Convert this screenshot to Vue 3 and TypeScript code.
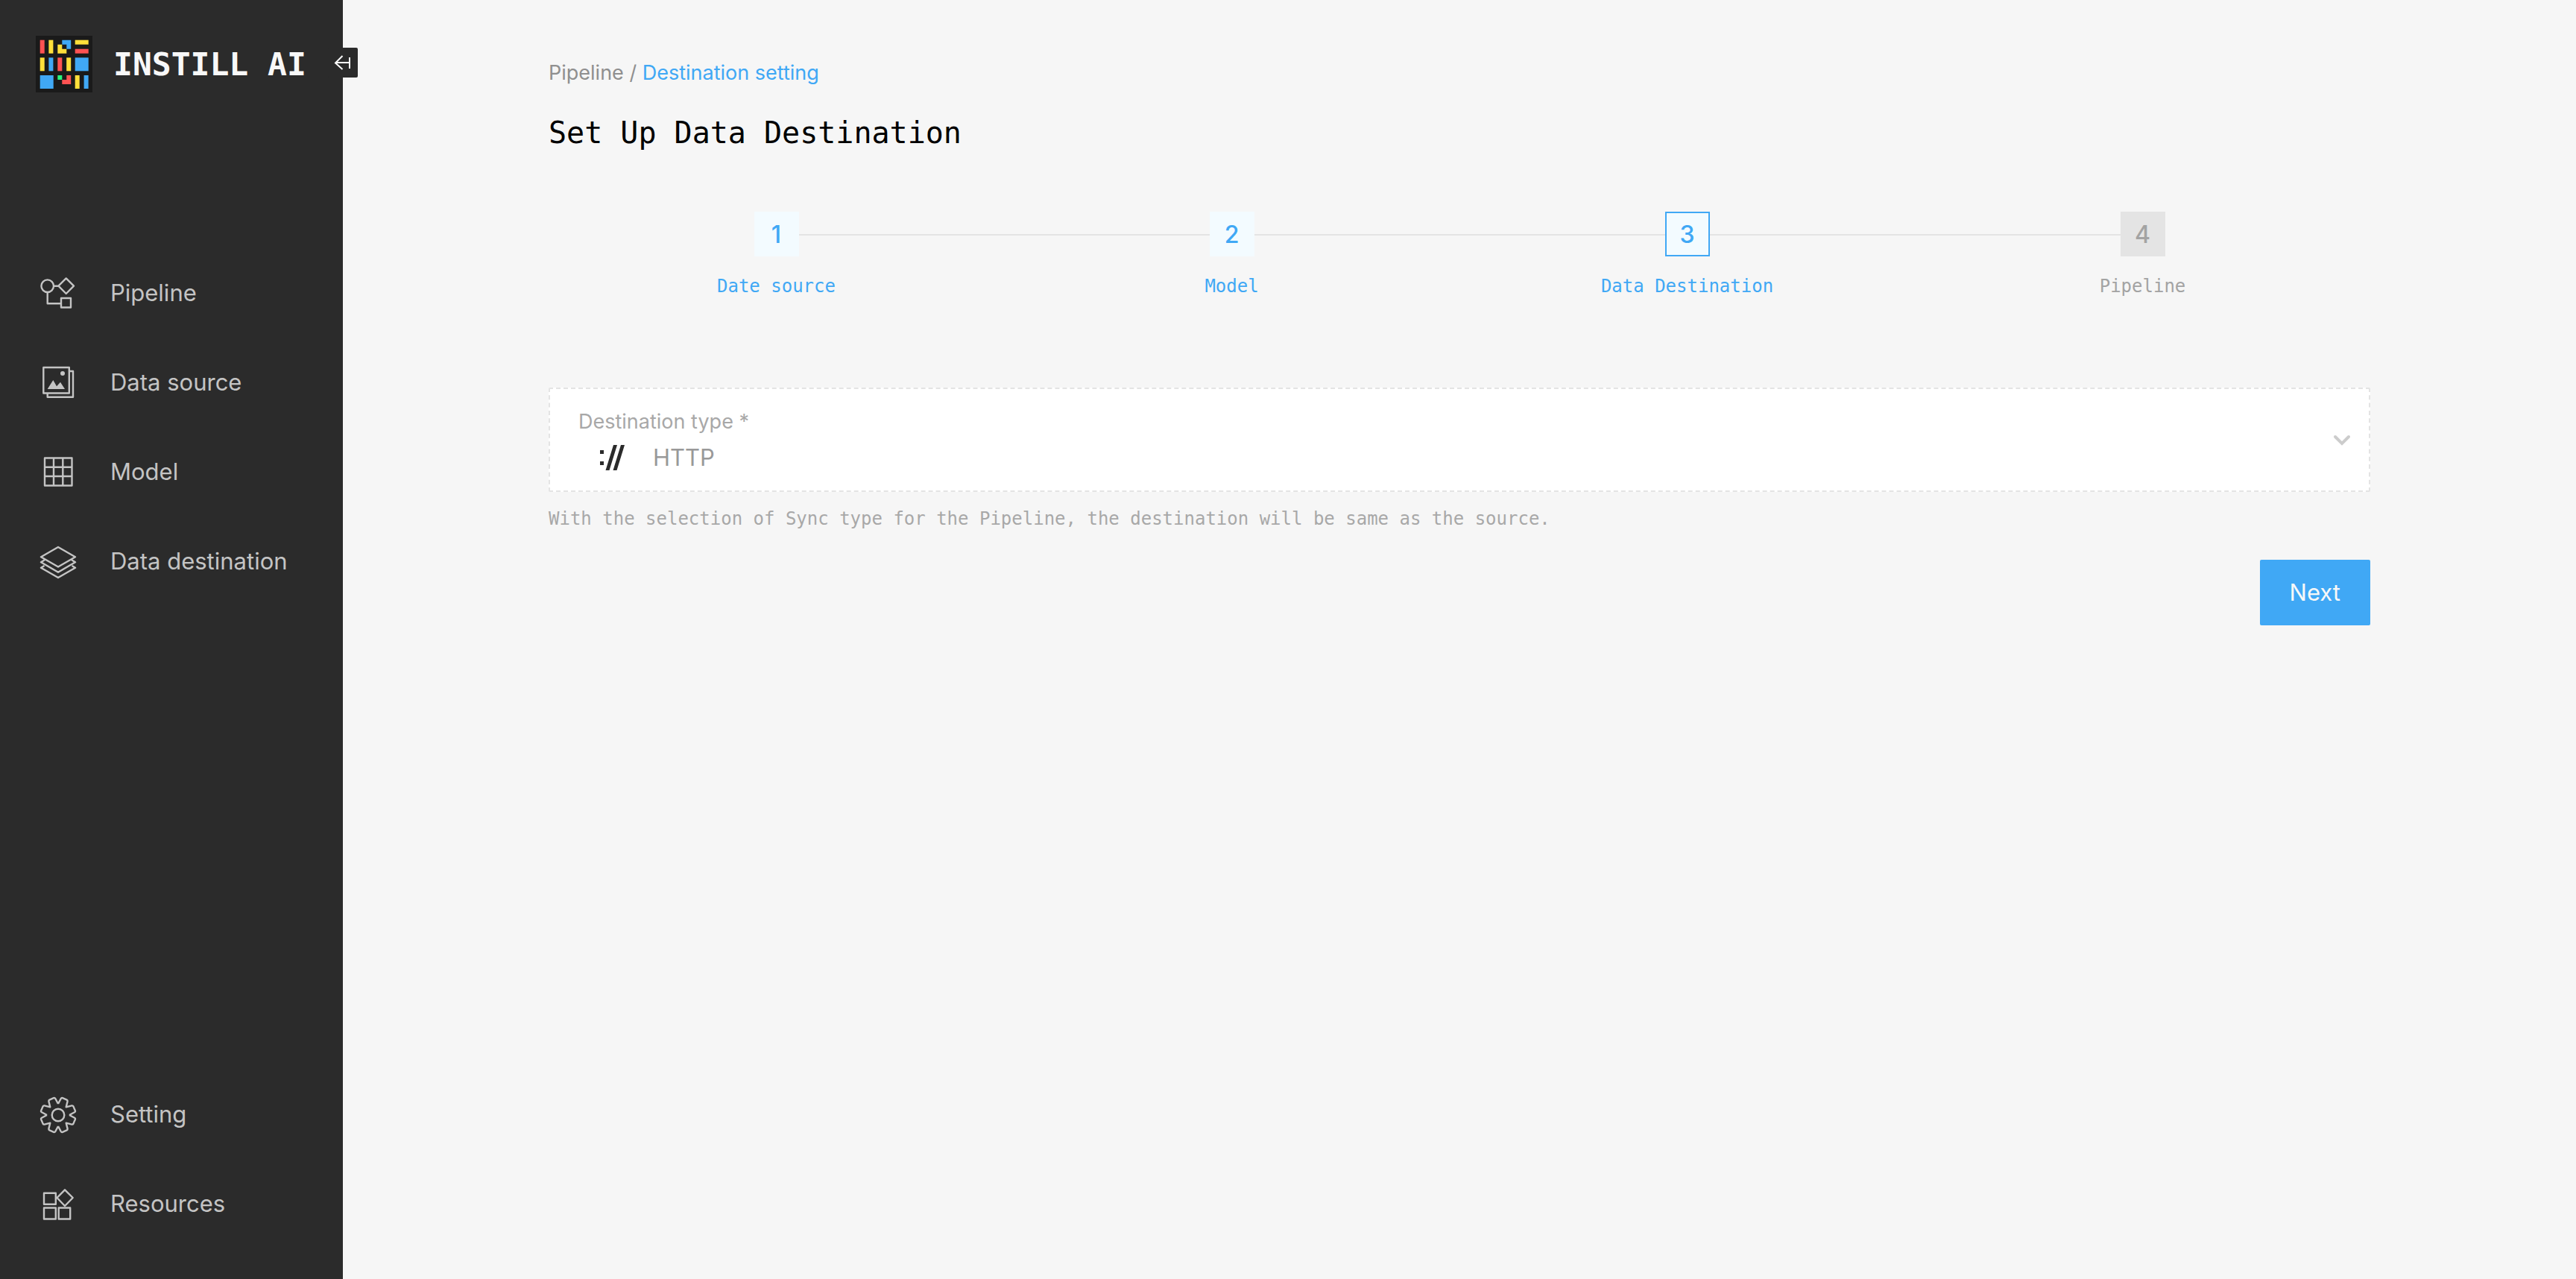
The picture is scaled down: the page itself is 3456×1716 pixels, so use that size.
<script setup lang="ts">
import { ref } from 'vue'

type IconName = 'pipeline' | 'source' | 'model' | 'layers' | 'gear' | 'blocks'
type StepState = 'done' | 'current' | 'todo'

interface NavItem {
  label: string
  icon: IconName
}

interface Step {
  label: string
  state: StepState
}

const navGroups: { name: string; items: NavItem[] }[] = [
  {
    name: 'Main',
    items: [
      { label: 'Pipeline', icon: 'pipeline' },
      { label: 'Data source', icon: 'source' },
      { label: 'Model', icon: 'model' },
      { label: 'Data destination', icon: 'layers' },
    ],
  },
  {
    name: 'Support',
    items: [
      { label: 'Setting', icon: 'gear' },
      { label: 'Resources', icon: 'blocks' },
    ],
  },
]

const steps: Step[] = [
  { label: 'Date source', state: 'done' },
  { label: 'Model', state: 'done' },
  { label: 'Data Destination', state: 'current' },
  { label: 'Pipeline', state: 'todo' },
]

const destination = ref('http')
</script>

<template>
  <div class="app">
    <aside class="sidebar">
      <a class="brand" href="#">
        <svg class="brand-mark" viewBox="0 0 76 76" aria-hidden="true">
          <rect width="76" height="76" fill="#1a1a1a" />
          <g fill="#ff5252">
            <rect x="5.7" y="5.7" width="6" height="18" />
            <rect x="52.7" y="17.7" width="18" height="6" />
            <rect x="29.3" y="29.3" width="6" height="18" />
            <path d="M41.3 53H47.2V65H35.3V59H41.3Z" />
          </g>
          <g fill="#ffdf3a">
            <rect x="17.4" y="5.7" width="6" height="18" />
            <path d="M29.3 11.7H35.3V17.7H41.3V23.7H29.3Z" />
            <rect x="52.7" y="5.7" width="18" height="6" />
            <rect x="5.7" y="29.3" width="6" height="18" />
            <rect x="41.2" y="29.3" width="6" height="18" />
            <rect x="52.7" y="53" width="6" height="18" />
          </g>
          <g fill="#40a8f5">
            <path d="M35.3 5.7H47.2V17.7H41.3V11.7H35.3Z" />
            <rect x="17.4" y="29.3" width="6" height="18" />
            <rect x="52.7" y="29.3" width="18" height="18" />
            <rect x="5.7" y="53" width="18" height="18" />
            <rect x="64.6" y="53" width="6" height="18" />
          </g>
          <rect x="29.3" y="53" width="6" height="6" fill="#29f47a" />
        </svg>
        <span class="brand-name">INSTILL AI</span>
      </a>

      <button class="collapse" type="button" aria-label="Collapse sidebar">
        <svg viewBox="0 0 40 40" aria-hidden="true">
          <path d="M19.500 11 10 20.500 19.500 29M10 20H29M29 13V28" />
        </svg>
      </button>

      <nav v-for="group in navGroups" :key="group.name" class="nav" :aria-label="group.name">
        <a v-for="item in group.items" :key="item.label" class="nav-link" href="#">
          <svg class="nav-icon" viewBox="0 0 48 48" aria-hidden="true">
            <template v-if="item.icon === 'pipeline'">
              <circle cx="9.700" cy="13.700" r="8.300" />
              <path d="M18 13.700H24.400L34.700 3.400 45 13.700 34.700 24 24.400 13.700M9.700 22V37.300H28" />
              <rect x="28" y="30" width="13" height="12.500" />
            </template>
            <template v-else-if="item.icon === 'source'">
              <rect x="4.300" y="3" width="34.500" height="34.500" />
              <path d="M39 8H44V42.700H9.700V38" />
              <circle class="solid" cx="30" cy="11" r="3" />
              <path class="solid" d="M9.700 32 17.300 20 22 28.300 27 22.700 33 32Z" />
            </template>
            <template v-else-if="item.icon === 'model'">
              <path d="M6 4.500H42.500V41.500H6ZM18 4.500V41.500M30.300 4.500V41.500M6 16.700H42.500M6 29H42.500" />
            </template>
            <template v-else-if="item.icon === 'layers'">
              <path d="M24 4 47 17.200 24 30.500 1 17.200ZM5.500 21.500 1 24.300 24 37.700 47 24.300 42.500 21.500M5.500 29 1 31.800 24 45 47 31.800 42.500 29" />
            </template>
            <template v-else-if="item.icon === 'gear'">
              <circle cx="24" cy="24" r="8.300" />
              <path
                v-for="turn in 4"
                :key="turn"
                :transform="`rotate(${turn * 90} 24 24)`"
                d="M9 24 2 20.300Q.6 19.500 1.200 18L3.600 12.400Q4.200 11.200 5.600 11.400L13.300 13.300 11.400 5.600Q11.200 4.200 12.400 3.600L18 1.200Q19.500 .6 20.300 2L24 9"
              />
            </template>
            <template v-else>
              <rect x="5" y="8.700" width="15.800" height="15" />
              <rect x="5" y="28.500" width="15.800" height="15" />
              <rect x="24.700" y="28.500" width="15.500" height="15" />
              <path d="M33 4.300 43.700 15 33 26 22.500 15Z" />
            </template>
          </svg>
          <span>{{ item.label }}</span>
        </a>
      </nav>
    </aside>

    <main class="content">
      <nav class="crumbs" aria-label="Breadcrumb">
        <a href="#">Pipeline</a> / <a class="crumb-current" href="#" aria-current="page">Destination setting</a>
      </nav>

      <h1 class="title">Set Up Data Destination</h1>

      <ol class="steps">
        <li v-for="(step, index) in steps" :key="step.label" class="step" :class="step.state">
          <span class="step-number">{{ index + 1 }}</span>
          <span class="step-label">{{ step.label }}</span>
        </li>
      </ol>

      <form class="form" @submit.prevent>
        <div class="field">
          <div class="field-body">
            <label class="field-label" for="destination-type">Destination type *</label>
            <div class="field-value">
              <svg class="field-icon" viewBox="0 0 60 40" aria-hidden="true">
                <path d="M9 10H14V15H9ZM9 25H14V30H9ZM27 3H32L21.500 37H16.500ZM37 3H42L31.500 37H26.500Z" />
              </svg>
              <select id="destination-type" v-model="destination" aria-describedby="destination-help">
                <option value="http">HTTP</option>
              </select>
            </div>
          </div>
          <svg class="chevron" viewBox="0 0 24 16" aria-hidden="true">
            <path d="M3 4 12 13 21 4" />
          </svg>
        </div>
        <p id="destination-help" class="help">
          With the selection of Sync type for the Pipeline, the destination will be same as the source.
        </p>
        <button class="next" type="submit">Next</button>
      </form>
    </main>
  </div>
</template>

<style>
body {
  background: #f6f6f6;
}
</style>

<style scoped>
.app {
  display: flex;
  min-height: 100vh;
  background: #f6f6f6;
  font-family: Inter, "Liberation Sans", sans-serif;
}

a {
  color: inherit;
  text-decoration: none;
}

.sidebar {
  position: relative;
  display: flex;
  flex: none;
  flex-direction: column;
  box-sizing: border-box;
  width: 460px;
  padding: 48px 0 40px;
  background: #2b2b2b;
}

.brand {
  display: flex;
  align-items: center;
  gap: 28px;
  margin-bottom: 210px;
  padding-left: 48px;
  color: #f8f8f8;
}

.brand-mark {
  width: 76px;
  height: 76px;
}

.brand-name {
  font: bold 43px/76px "DejaVu Sans Mono", monospace;
  white-space: nowrap;
}

.collapse {
  position: absolute;
  top: 64px;
  right: -20px;
  width: 40px;
  height: 40px;
  padding: 0;
  border: 0;
  border-radius: 2px;
  background: #2b2b2b;
}

.collapse svg {
  display: block;
  fill: none;
  stroke: #fff;
  stroke-width: 2;
}

.nav:last-child {
  margin-top: auto;
}

.nav-link {
  display: flex;
  align-items: center;
  gap: 46px;
  height: 120px;
  padding-left: 54px;
  color: #c4c4c4;
  font-size: 31px;
  line-height: 40px;
}

.nav-link span {
  padding-bottom: 2px;
}

.nav-icon {
  width: 48px;
  height: 48px;
  overflow: visible;
  fill: none;
  stroke: currentColor;
  stroke-width: 2.4;
  stroke-linejoin: round;
}

.nav-icon .solid {
  fill: currentColor;
  stroke: none;
}

.content {
  flex: 1;
  min-width: 0;
  padding: 78px 276px 0;
}

.crumbs {
  color: #8f8f8f;
  font-size: 27px;
  line-height: 40px;
}

.crumb-current {
  color: #40a8f5;
}

.title {
  margin: 32px 0 0;
  color: #000;
  font: normal 40px/56px "DejaVu Sans Mono", monospace;
}

.steps {
  display: grid;
  grid-template-columns: repeat(4, 1fr);
  margin: 78px 0 0;
  padding: 0;
  list-style: none;
}

.step {
  position: relative;
  display: flex;
  flex-direction: column;
  align-items: center;
  color: #40a8f5;
}

.step + .step::before {
  content: "";
  position: absolute;
  top: 30px;
  right: calc(50% + 30px);
  width: calc(100% - 60px);
  height: 2px;
  background: #e4e4e4;
}

.step-number {
  box-sizing: border-box;
  width: 60px;
  height: 60px;
  border: 2px solid #f3fbff;
  background: #f3fbff;
  font-size: 32px;
  font-weight: 500;
  line-height: 58px;
  text-align: center;
}

.step.current .step-number {
  border-color: #40a8f5;
}

.step.todo {
  color: #a3a3a3;
}

.step.todo .step-number {
  border-color: #e4e4e4;
  background: #e4e4e4;
}

.step-label {
  margin-top: 24px;
  font: 24px/32px "DejaVu Sans Mono", monospace;
}

.form {
  display: flex;
  flex-direction: column;
  margin-top: 120px;
}

.field {
  display: flex;
  align-items: center;
  box-sizing: border-box;
  height: 140px;
  padding: 0 24px 0 38px;
  border: 2px dashed #e4e4e4;
  border-radius: 2px;
  background: #fff;
}

.field-body {
  flex: 1;
}

.field-label {
  display: block;
  color: #a8a8a8;
  font-size: 27px;
  line-height: 40px;
}

.field-value {
  display: flex;
  align-items: center;
  padding: 8px 0 0 20px;
}

.field-icon {
  width: 60px;
  height: 40px;
  fill: #2b2b2b;
}

select {
  flex: 1;
  height: 40px;
  margin-left: 20px;
  padding: 0;
  border: 0;
  background: none;
  appearance: none;
  color: #999;
  font: 31px/40px Inter, "Liberation Sans", sans-serif;
}

.chevron {
  width: 24px;
  height: 16px;
  fill: none;
  stroke: #ccc;
  stroke-width: 4;
  stroke-linecap: round;
}

.help {
  margin: 20px 0 0;
  color: #a8a8a8;
  font: 24px/32px "DejaVu Sans Mono", monospace;
}

.next {
  align-self: flex-end;
  height: 88px;
  margin-top: 39px;
  padding: 0 40px;
  border: 0;
  border-radius: 2px;
  background: #40a8f5;
  color: #f8f8f8;
  font: 31px/40px Inter, "Liberation Sans", sans-serif;
}
</style>
